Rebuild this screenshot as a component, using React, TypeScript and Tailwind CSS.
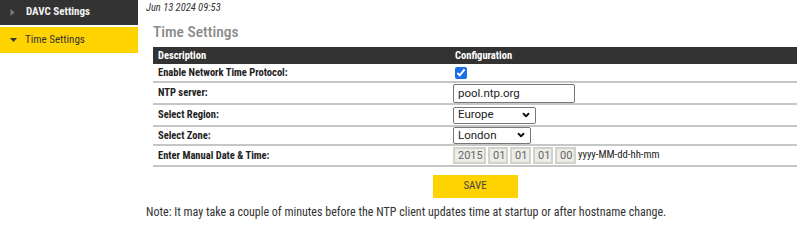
import { ChevronDown } from "lucide-react";

const cond = "[font-family:Roboto,'Liberation_Sans',sans-serif] [font-stretch:75%]";
const plain = "[font-family:Roboto,'Liberation_Sans',sans-serif] [font-stretch:90%]";

function Row({ label, children, h }: { label: string; children: React.ReactNode; h: string }) {
  return (
    <div className={`flex ${h} items-center border-b-2 border-[#c6c6c6]`}>
      <div className="w-[300px] pl-[5px] text-[10.5px] font-bold text-[#222]">{label}</div>
      <div className="flex items-center">{children}</div>
    </div>
  );
}

function Select({ value, w }: { value: string; w: string }) {
  return (
    <div className={`relative ${w}`}>
      <select
        defaultValue={value}
        className={`block h-[17px] w-full appearance-none rounded-[2px] border border-[#767676] bg-white pl-[4px] text-[11.5px] leading-none text-[#222] ${plain}`}
      >
        <option>{value}</option>
      </select>
      <ChevronDown className="pointer-events-none absolute right-[5px] top-[3px] h-[10px] w-[10px] text-[#111]" strokeWidth={4.5} />
    </div>
  );
}

function DateBox({ v, w }: { v: string; w: string }) {
  return (
    <input
      disabled
      value={v}
      readOnly
      className={`${w} block h-[17px] border-2 border-[#d2d2cc] bg-[#ededE7] pl-[3px] text-[11px] leading-none text-[#666] ${plain}`}
    />
  );
}

export default function App() {
  return (
    <div className={`flex h-[230px] w-[800px] overflow-hidden bg-white ${cond}`}>
      <div className="flex w-[138px] shrink-0 flex-col gap-[2px]">
        <div className="flex h-[25px] items-center bg-[#333] pl-[10px] text-[11px] font-bold text-[#f2f2f2]">
          <svg width="5" height="7" viewBox="0 0 5 7" className="mr-[11px]">
            <path d="M0.5 0 L4.5 3.5 L0.5 7 Z" fill="#7a7a7a" />
          </svg>
          DAVC Settings
        </div>
        <div className="flex h-[26px] items-center bg-[#ffd300] pl-[10px] text-[11px] text-[#333]">
          <svg width="7" height="4" viewBox="0 0 7 4" className="mr-[8px]">
            <path d="M0 0 L7 0 L3.5 4 Z" fill="#333" />
          </svg>
          Time Settings
        </div>
      </div>
      <div className="ml-[8px] flex flex-1 flex-col">
        <div className="pt-[1px] text-[10.5px] italic leading-[13px] text-[#333]">Jun 13 2024 09:53</div>
        <div className="ml-[7px] mt-[9px] text-[15.5px] font-medium leading-[18px] text-[#8a8a8a]">Time Settings</div>
        <div className="ml-[7px] mt-[6px] w-[644px]">
          <div className="flex h-[17px] items-center bg-[#333] text-[10.5px] font-bold text-white">
            <div className="w-[300px] pl-[5px]">Description</div>
            <div className="pl-[2px]">Configuration</div>
          </div>
          <Row label="Enable Network Time Protocol:" h="h-[19px]">
            <input type="checkbox" defaultChecked className="m-0 ml-[2px] block h-[12px] w-[12px] accent-[#1a6fe6]" />
          </Row>
          <Row label="NTP server:" h="h-[22px]">
            <input
              defaultValue="pool.ntp.org"
              className={`block h-[19px] w-[122px] rounded-[2px] border border-[#767676] pl-[4px] text-[11.5px] text-[#222] ${plain}`}
            />
          </Row>
          <Row label="Select Region:" h="h-[22px]">
            <Select value="Europe" w="w-[83px]" />
          </Row>
          <Row label="Select Zone:" h="h-[19px]">
            <Select value="London" w="w-[78px]" />
          </Row>
          <Row label="Enter Manual Date & Time:" h="h-[21px]">
            <div className="flex items-center gap-[2px]">
              <DateBox v="2015" w="w-[33px]" />
              <DateBox v="01" w="w-[20px]" />
              <DateBox v="01" w="w-[21px]" />
              <DateBox v="01" w="w-[20px]" />
              <DateBox v="00" w="w-[21px]" />
              <span className="text-[10.7px] text-[#222]">yyyy-MM-dd-hh-mm</span>
            </div>
          </Row>
          <div className="flex justify-center pt-[8px]">
            <button className="h-[23px] w-[85px] bg-[#ffd300] text-[11px] text-[#444]">SAVE</button>
          </div>
        </div>
        <div className="mt-[7px] text-[12px] leading-[15px] text-[#333]">
          Note: It may take a couple of minutes before the NTP client updates time at startup or after hostname change.
        </div>
      </div>
    </div>
  );
}
